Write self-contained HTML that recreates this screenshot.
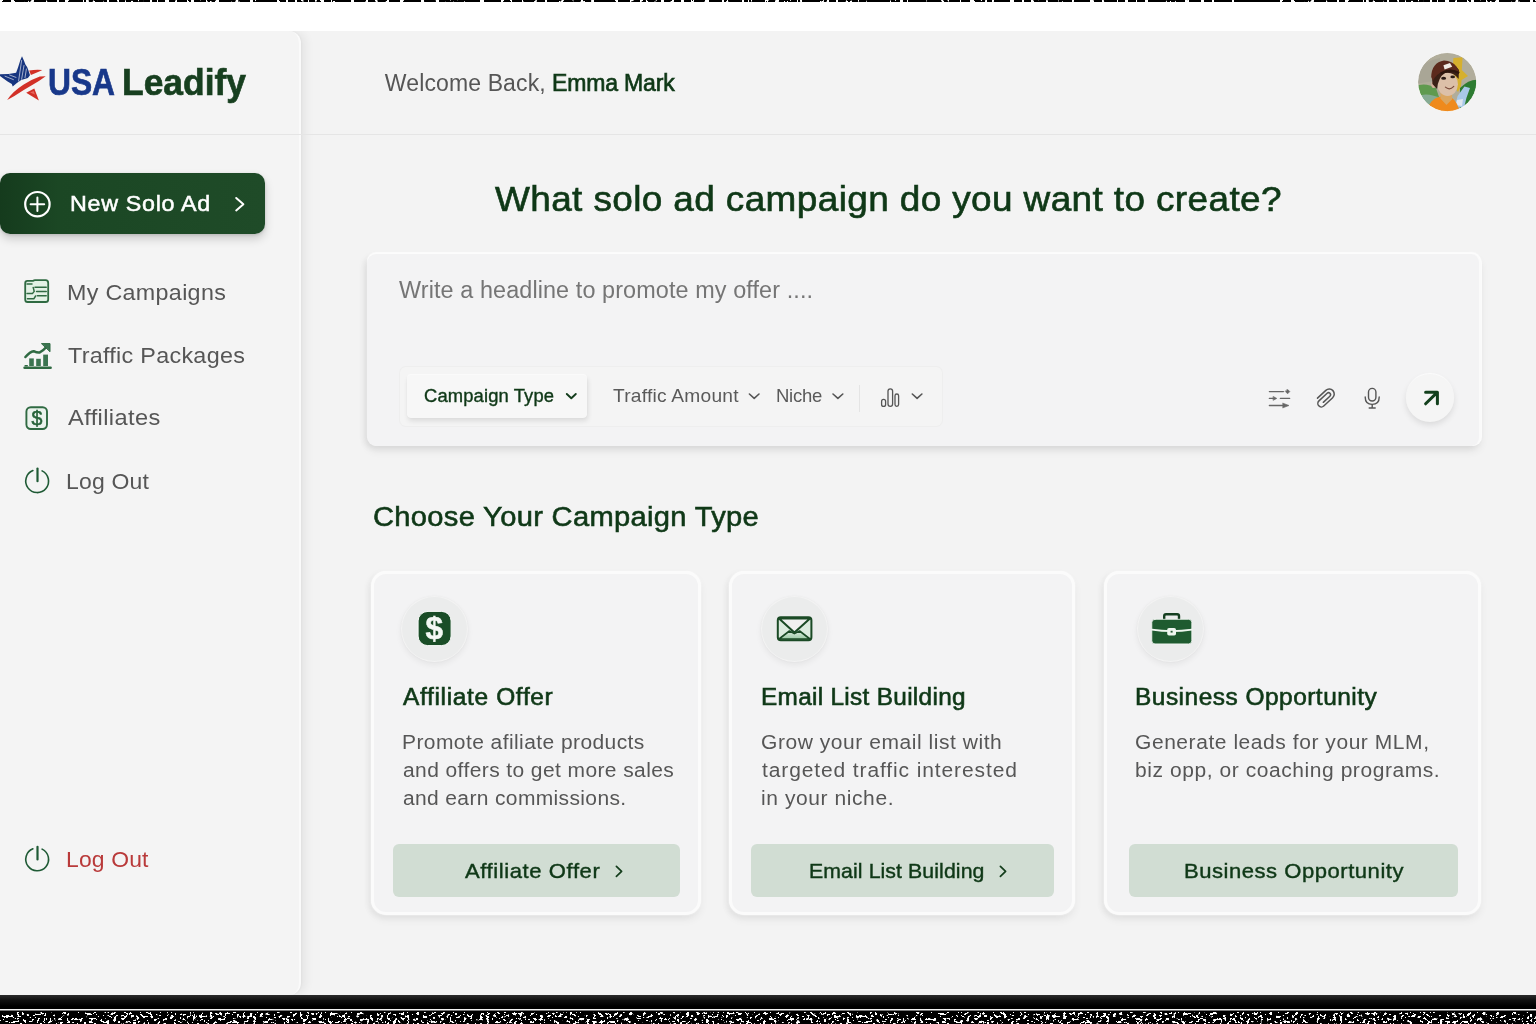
<!DOCTYPE html>
<html lang="en">
<head>
<meta charset="utf-8">
<title>USA Leadify</title>
<style>
*{box-sizing:border-box;margin:0;padding:0}
html,body{width:1536px;height:1024px;overflow:hidden;background:#fff}
body{font-family:"Liberation Sans",sans-serif;position:relative;color:#555}
.t{position:absolute;white-space:nowrap;line-height:1;font-family:"Liberation Sans",sans-serif}
svg{position:absolute;overflow:visible}
#app{position:absolute;left:0;top:31px;width:1536px;height:964px;background:#f3f3f3;overflow:hidden;will-change:transform}
#side{position:absolute;left:0;top:0;width:301px;height:964px;background:#f4f4f4;border-radius:0 12px 12px 0;border-right:2px solid #fafafa;box-shadow:5px 0 10px rgba(0,0,0,.06), 1px 0 2px rgba(0,0,0,.03)}
#hline{position:absolute;left:0;top:103px;width:1536px;height:1px;background:#e5e5e5}
#topnoise{position:absolute;left:0;top:0;width:1536px;height:3px}
#botband{position:absolute;left:0;top:995px;width:1536px;height:29px;background:linear-gradient(#2c2c2c 0,#111 5px,#000 11px)}
#botline{position:absolute;left:0;top:1009px;width:1536px;height:2px;background:linear-gradient(#f2f2f2 0,#f2f2f2 50%,#777 50%,#777 100%)}
#botnoise{position:absolute;left:0;top:1010px;width:1536px;height:14px}
#newbtn{position:absolute;left:0;top:142px;width:265px;height:61px;background:linear-gradient(90deg,#153b1d 0,#1b4724 22%,#1f4b28 100%);border-radius:10px;box-shadow:0 5px 10px rgba(0,0,0,.17), 0 1px 3px rgba(0,0,0,.12)}
#inputcard{position:absolute;left:367px;top:223px;width:1114px;height:192px;background:#f3f3f4;border-radius:9px;border-right:2px solid #fafafa;box-shadow:0 -2px 1px #fcfcfc, 1px 0 0 #fbfbfb, -3px 2px 6px rgba(0,0,0,.06), 0 5px 8px rgba(0,0,0,.07)}
#toolbar{position:absolute;left:400px;top:336px;width:542px;height:59px;background:#f4f4f4;border-radius:6px;box-shadow:0 0 0 1px #eeeeee}
#ctype{position:absolute;left:407px;top:344px;width:180px;height:43px;background:#f7f7f7;border-radius:4px;box-shadow:0 -1px 0 #fafafa, 1px 3px 5px rgba(0,0,0,.10), 0 0 1px rgba(0,0,0,.08)}
#tdiv{position:absolute;left:859px;top:354px;width:1px;height:27px;background:#e4e4e4}
#send{position:absolute;left:1406px;top:343px;width:48px;height:48px;border-radius:50%;background:#f5f5f5;box-shadow:0 3px 6px rgba(0,0,0,.10), 0 -1px 1px #fff}
.card{position:absolute;top:540px;height:344px;background:#f3f3f4;border-radius:15px;border:3px solid #fbfbfb;box-shadow:0 0 2px rgba(255,255,255,.9), -3px 2px 6px rgba(0,0,0,.045), 0 5px 8px rgba(0,0,0,.055)}
.ic{position:absolute;top:565px;width:67px;height:66px;border-radius:50%;background:#ebecec;border:1.5px solid #f3f3f3;box-shadow:0 3px 6px rgba(0,0,0,.06), 0 0 2px rgba(0,0,0,.04)}
.cbtn{position:absolute;top:813px;height:53px;background:#d1ddd3;border-radius:6px}
</style>
</head>
<body>
<div id="app">
<div id="side"></div>
<div id="hline"></div>
<div id="newbtn"></div>
<div id="inputcard"></div>
<div id="toolbar"></div>
<div id="ctype"></div>
<div id="tdiv"></div>
<div id="send"></div>
<div class="card" style="left:371px;width:330px"></div>
<div class="card" style="left:729px;width:346px"></div>
<div class="card" style="left:1104px;width:377px"></div>
<div class="ic" style="left:401px"></div>
<div class="ic" style="left:761px"></div>
<div class="ic" style="left:1137px"></div>
<div class="cbtn" style="left:393px;width:287px"></div>
<div class="cbtn" style="left:751px;width:303px"></div>
<div class="cbtn" style="left:1129px;width:329px"></div>
<span class="t" style="left:47.75px;top:33.00px;font-size:37.4px;color:#18388a;transform:scaleX(0.8487);transform-origin:0 50%;font-weight:700;-webkit-text-stroke:0.7px #18388a;">USA</span>
<span class="t" style="left:121.66px;top:33.00px;font-size:37.4px;color:#173f1f;transform:scaleX(0.9473);transform-origin:0 50%;font-weight:700;-webkit-text-stroke:0.7px #173f1f;">Leadify</span>
<span class="t" style="left:384.80px;top:41.00px;font-size:23px;color:#565656;letter-spacing:0.128px;">Welcome Back,</span>
<span class="t" style="left:552.05px;top:41.00px;font-size:23px;color:#0f3817;letter-spacing:-0.156px;-webkit-text-stroke:0.7px #0f3817;">Emma Mark</span>
<span class="t" style="left:69.70px;top:162.00px;font-size:22.2px;color:#fff;letter-spacing:0.646px;transform:scaleX(1.0500);transform-origin:0 50%;-webkit-text-stroke:0.5px #fff;">New Solo Ad</span>
<span class="t" style="left:67.06px;top:251.00px;font-size:22.5px;color:#565656;letter-spacing:0.306px;transform:scaleX(1.0351);transform-origin:0 50%;">My Campaigns</span>
<span class="t" style="left:68.00px;top:314.00px;font-size:22.5px;color:#565656;letter-spacing:0.270px;transform:scaleX(1.0380);transform-origin:0 50%;">Traffic Packages</span>
<span class="t" style="left:68.00px;top:376.00px;font-size:22.5px;color:#565656;letter-spacing:0.360px;transform:scaleX(1.0500);transform-origin:0 50%;">Affiliates</span>
<span class="t" style="left:66.48px;top:440.00px;font-size:22.5px;color:#565656;letter-spacing:0.189px;transform:scaleX(1.0218);transform-origin:0 50%;">Log Out</span>
<span class="t" style="left:65.98px;top:818.00px;font-size:22.5px;color:#b93a3a;letter-spacing:0.157px;transform:scaleX(1.0180);transform-origin:0 50%;">Log Out</span>
<span class="t" style="left:495.32px;top:151.00px;font-size:35.8px;color:#0f3817;letter-spacing:0.363px;transform:scaleX(1.0324);transform-origin:0 50%;-webkit-text-stroke:0.65px #0f3817;">What solo ad campaign do you want to create?</span>
<span class="t" style="left:398.60px;top:248.00px;font-size:23px;color:#757575;letter-spacing:0.107px;transform:scaleX(1.0162);transform-origin:0 50%;">Write a headline to promote my offer ....</span>
<span class="t" style="left:424.19px;top:356.00px;font-size:18px;color:#0f3817;letter-spacing:0.139px;transform:scaleX(1.0203);transform-origin:0 50%;-webkit-text-stroke:0.38px #0f3817;">Campaign Type</span>
<span class="t" style="left:612.70px;top:356.00px;font-size:18.5px;color:#5a5a5a;letter-spacing:0.216px;transform:scaleX(1.0366);transform-origin:0 50%;">Traffic Amount</span>
<span class="t" style="left:775.90px;top:356.00px;font-size:18.5px;color:#5a5a5a;letter-spacing:-0.202px;">Niche</span>
<span class="t" style="left:373.47px;top:471.00px;font-size:28.2px;color:#0f3817;letter-spacing:0.315px;transform:scaleX(1.0320);transform-origin:0 50%;-webkit-text-stroke:0.6px #0f3817;">Choose Your Campaign Type</span>
<span class="t" style="left:403.20px;top:655.00px;font-size:23.3px;color:#0f3817;letter-spacing:0.629px;transform:scaleX(1.0500);transform-origin:0 50%;-webkit-text-stroke:0.6px #0f3817;">Affiliate Offer</span>
<span class="t" style="left:760.96px;top:655.00px;font-size:23.3px;color:#0f3817;letter-spacing:0.300px;transform:scaleX(1.0449);transform-origin:0 50%;-webkit-text-stroke:0.6px #0f3817;">Email List Building</span>
<span class="t" style="left:1135.45px;top:655.00px;font-size:23.3px;color:#0f3817;letter-spacing:0.465px;transform:scaleX(1.0500);transform-origin:0 50%;-webkit-text-stroke:0.6px #0f3817;">Business Opportunity</span>
<span class="t" style="left:401.85px;top:701.00px;font-size:20px;color:#565656;letter-spacing:0.400px;transform:scaleX(1.0500);transform-origin:0 50%;">Promote afiliate products</span>
<span class="t" style="left:402.90px;top:729.00px;font-size:20px;color:#565656;letter-spacing:0.384px;transform:scaleX(1.0500);transform-origin:0 50%;">and offers to get more sales</span>
<span class="t" style="left:402.90px;top:757.00px;font-size:20px;color:#565656;letter-spacing:0.343px;transform:scaleX(1.0500);transform-origin:0 50%;">and earn commissions.</span>
<span class="t" style="left:760.65px;top:701.00px;font-size:20px;color:#565656;letter-spacing:0.523px;transform:scaleX(1.0500);transform-origin:0 50%;">Grow your email list with</span>
<span class="t" style="left:761.70px;top:729.00px;font-size:20px;color:#565656;letter-spacing:0.841px;transform:scaleX(1.0500);transform-origin:0 50%;">targeted traffic interested</span>
<span class="t" style="left:760.65px;top:757.00px;font-size:20px;color:#565656;letter-spacing:0.555px;transform:scaleX(1.0500);transform-origin:0 50%;">in your niche.</span>
<span class="t" style="left:1134.85px;top:701.00px;font-size:20px;color:#565656;letter-spacing:0.530px;transform:scaleX(1.0500);transform-origin:0 50%;">Generate leads for your MLM,</span>
<span class="t" style="left:1134.95px;top:729.00px;font-size:20px;color:#565656;letter-spacing:0.537px;transform:scaleX(1.0500);transform-origin:0 50%;">biz opp, or coaching programs.</span>
<span class="t" style="left:465.21px;top:829.00px;font-size:21px;color:#0f3817;letter-spacing:0.553px;transform:scaleX(1.0500);transform-origin:0 50%;-webkit-text-stroke:0.42px #0f3817;">Affiliate Offer</span>
<span class="t" style="left:809.00px;top:829.00px;font-size:21px;color:#0f3817;letter-spacing:0.083px;transform:scaleX(1.0134);transform-origin:0 50%;-webkit-text-stroke:0.42px #0f3817;">Email List Building</span>
<span class="t" style="left:1184.06px;top:829.00px;font-size:21px;color:#0f3817;letter-spacing:0.497px;transform:scaleX(1.0500);transform-origin:0 50%;-webkit-text-stroke:0.42px #0f3817;">Business Opportunity</span>
<svg style="left:0;top:0" width="1536" height="964" viewBox="0 31 1536 964" fill="none" stroke-linecap="round" stroke-linejoin="round">
<defs>
<clipPath id="avc"><circle cx="1447.2" cy="82.1" r="29.3"/></clipPath>
<linearGradient id="envg" x1="0" y1="0" x2="0" y2="1"><stop offset="0" stop-color="#dcebdf"/><stop offset="1" stop-color="#9ccaa6"/></linearGradient>
</defs>
<!-- logo star -->
<g id="star" stroke="none">
<path d="M22 56.3 L24.1 61 L25.4 64.4 L27.1 66.9 L28.4 70.3 L30 75.2 L27.9 77.9 L21.2 80 L16.9 83 L12.7 86.6 L11.8 83.9 L7.6 81.5 L3.4 78.6 L0 76 L0 74.3 L8.5 74 L16.1 72.8 L18.2 66.9 L20.3 60.2 Z" fill="#17357f"/>
<path d="M21.6 60.5 L18.6 81 M24 65.5 L21.6 79.2 M5 76.2 L13.4 79.6 M26.4 69 L25 77.6 M9.6 75 L16 77.4" stroke="#fff" stroke-width="0.75" opacity=".8"/>
<path d="M29.2 70.4 Q36 69.2 42.3 69.9 L39.8 71.2 L33.9 73.7 L30.9 75.1 Z" fill="#d23027"/>
<path d="M45.7 76.2 L39.8 76.4 Q32.2 79 23.7 84.5 Q12 92 7.2 100 L14.4 96.1 Q23.7 89.9 32.2 85.1 Q39.8 80.6 45.7 76.2 Z" fill="#d23027"/>
<path d="M26.2 92.7 L34.3 88.5 L38.9 100.5 Z" fill="#d23027"/>
<path d="M30 92.6 L33.6 91 L35 94.6 Z" fill="#e8655c"/>
</g>
<!-- avatar -->
<filter id="avb" x="-5%" y="-5%" width="110%" height="110%"><feGaussianBlur stdDeviation="0.55"/></filter>
<g clip-path="url(#avc)" stroke="none"><g filter="url(#avb)">
<rect x="1415" y="50" width="65" height="65" fill="#b1ad9b"/>
<path d="M1415 70 Q1428 60 1440 58 L1440 80 L1415 84z" fill="#a9a696"/>
<path d="M1415 86 Q1426 82 1436 88 L1440 100 L1415 104z" fill="#5f9a4f"/>
<path d="M1417 96 Q1428 92 1440 98 v16 h-26z" fill="#86ab93"/>
<path d="M1453.4 58 L1462.6 57.2 L1461.8 70 L1468 76 L1461.6 80 L1461 86 L1458 92 L1452 84z" fill="#d6b02e"/>
<path d="M1460 88 Q1470 78 1480 80 v36 h-20z" fill="#2e7b32"/>
<path d="M1464.4 86.6 L1470 88 L1466.4 98 L1464 108 L1455 106 L1457.6 96z" fill="#a8c8e8"/>
<path d="M1457 100 L1463 99 L1462 106 L1456 105z" fill="#dfe6ee"/>
<path d="M1427 113 Q1429 98.6 1441 96.6 L1452 98 Q1458 102 1459.4 113 Z" fill="#ef8a1b"/>
<path d="M1440.4 92 h11.6 v7.4 l-5.6 5.6 l-6 -6.4z" fill="#dba660"/>
<ellipse cx="1447.6" cy="84.2" rx="10.3" ry="11.8" fill="#dcc0a8"/>
<ellipse cx="1433.6" cy="84.6" rx="2.3" ry="3.4" fill="#d6b49c"/>
<path d="M1432.4 84 Q1431 67 1442 62.6 Q1452 60.6 1459 70 L1458.6 79 Q1453 71.4 1445 73 Q1438.4 77 1437 89 Z" fill="#3b2016"/>
<path d="M1431.2 77 Q1431.6 62.4 1444 60.4 Q1452.4 60.6 1456.4 66.6 L1459.6 72.4 Q1450 67 1440.6 72.6 Q1434.6 76.6 1433 81 Z" fill="#5c2a1c"/>
<path d="M1440 72.8 Q1450 66.6 1459.6 72 L1458.8 74 Q1450 69.6 1441 74.6z" fill="#2e1810"/>
<path d="M1443.4 65.2 l6.6 -2.2 l2.2 3.8 l-7.6 2.8z" fill="#f1ebe4"/>
<ellipse cx="1443.6" cy="78.2" rx="2.5" ry="1.5" fill="#2a1a14"/>
<ellipse cx="1452.7" cy="76.9" rx="2.3" ry="1.4" fill="#2a1a14"/>
<path d="M1445.4 87.2 Q1449.6 90.8 1453.8 86.4" stroke="#7a4a3a" stroke-width="1.1" fill="none"/>
</g></g>
<circle cx="1447.2" cy="82.1" r="29.6" stroke="#f6f6f4" stroke-width="0.9" fill="none"/>
<!-- new solo ad icons -->
<g stroke="#fff" stroke-width="2">
<circle cx="37.4" cy="204.2" r="12.2" stroke-width="2.2"/>
<path d="M37.4 197.4 V211 M30.6 204.2 H44.2"/>
<path d="M236.2 198 L243.4 204.2 L236.2 210.4"/>
</g>
<!-- my campaigns -->
<g stroke="#2f6a42" stroke-width="1.8">
<path d="M27.4 280.8 H33.2 Q34 280.2 35 280.2 H45.6 Q48.2 280.2 48.2 283 V299.4 Q48.2 302 45.6 302 H27.6 Q25.2 302 25.2 299.4 V283.2 Q25.2 280.8 27.4 280.8 Z" fill="#e2f1e5"/>
<path d="M35 287.2 H46.2 M36.6 291.5 H46.2 M37.4 295.8 H46.2" stroke-width="1.6"/>
<path d="M27 284 H32 M27 293.6 H32.4 L34.2 291.4 L33.2 287.4 M27.4 298.8 H33.8 L35.6 296" stroke-width="1.5"/>
</g>
<!-- traffic packages -->
<g stroke="#2f6a42" fill="#3b7450">
<path d="M24.6 367.8 H50.6" stroke-width="2.6"/>
<rect x="29.2" y="358.4" width="4.6" height="7.6" stroke="none"/>
<rect x="36.2" y="358.8" width="4.6" height="7.2" stroke="none"/>
<rect x="43.2" y="354.6" width="4.8" height="11.4" stroke="none"/>
<path d="M25.4 357 Q30 351.6 33.6 351.2 Q37 352.8 39.4 352.6 Q43.4 350.6 47 346.2" stroke-width="2.5" fill="none"/>
<path d="M41.8 343.6 H50 V351.4 Z" stroke-width="1" />
<path d="M25.2 365.8 h2" stroke-width="1.6"/>
</g>
<!-- affiliates -->
<g>
<rect x="26.4" y="407.2" width="20.6" height="21.8" rx="4.4" stroke="#2f6a42" stroke-width="1.9" fill="#ebf3ed"/>
</g>
<!-- power icons -->
<g stroke="#1f5a35">
<path d="M32.9 470.6 A11.4 11.4 0 1 0 42.1 470.9" stroke-width="1.6"/>
<path d="M37.5 468.6 V481.2" stroke-width="2.2"/>
<path d="M32.9 848.8 A11.4 11.4 0 1 0 42.1 849.1" stroke-width="1.6"/>
<path d="M37.5 846.8 V859.4" stroke-width="2.2"/>
</g>
<!-- toolbar chevrons -->
<path d="M566.8 394 L571.3 398.2 L575.8 394" stroke="#143d1c" stroke-width="1.9"/>
<g stroke="#555" stroke-width="1.6">
<path d="M749.4 394 L754.2 398.4 L759 394"/>
<path d="M833 394 L837.9 398.4 L842.8 394"/>
<path d="M912.3 394 L917.1 398.4 L921.9 394"/>
</g>
<!-- bars icon -->
<g stroke="#555" stroke-width="1.3">
<rect x="881.6" y="399.4" width="4" height="7" rx="2"/>
<rect x="888" y="388.8" width="4.6" height="17.6" rx="2.3"/>
<rect x="895" y="394" width="3.6" height="12.4" rx="1.8"/>
</g>
<!-- sliders -->
<g stroke="#666" stroke-width="1.4" fill="#666">
<path d="M1269.4 391.6 H1283.4"/><path d="M1287.6 389.4 L1289.8 391.6 L1287.6 393.8 L1285.4 391.6 Z" stroke-width=".6"/>
<path d="M1269.4 398.4 H1273.6 M1280.4 398.4 H1289.6"/><path d="M1273.4 396.6 L1276.8 398.4 L1273.4 400.2 Z" stroke-width=".6"/>
<path d="M1269.4 405.5 H1283"/><path d="M1283 403.2 L1289 405.5 L1283 407.8 Z" stroke-width=".6"/>
</g>
<!-- paperclip -->
<g transform="translate(1325 398) rotate(-43) translate(0.4 -2.5)" stroke="#555" stroke-width="1.5">
<path d="M-6 -2.5 H5.4 A5 5 0 0 1 5.4 7.5 H-6.8 A3.5 3.5 0 0 1 -6.8 0.5 H4.4 A2 2 0 0 1 4.4 4.5 H-4.6"/>
</g>
<!-- mic -->
<g stroke="#555" stroke-width="1.4">
<rect x="1368.5" y="388.4" width="7.4" height="12.6" rx="3.7"/>
<path d="M1365.2 397 Q1365.2 404.4 1372.2 404.4 Q1379.2 404.4 1379.2 397"/>
<path d="M1372.2 404.6 V407.6 M1369.2 408 H1375.2"/>
</g>
<!-- send arrow -->
<path d="M1425.6 392.2 H1437.4 V403.8 M1437 392.6 L1425.6 403.8" stroke="#13401d" stroke-width="3"/>
<!-- card 1 icon -->
<rect x="418.1" y="611.4" width="33" height="34.2" rx="9.5" fill="#1a4d27" stroke="#f7faf7" stroke-width="1"/>
<!-- card 2 envelope -->
<g stroke="#1a4a25" stroke-width="2">
<rect x="777.8" y="617.2" width="33.6" height="23" rx="3" fill="#dcebdf"/>
<path d="M779 639 L789.4 631 L794.4 633.6 L799.6 631 L810 639 Z" fill="url(#envg)" stroke-width="1.6"/>
<path d="M779 618.6 L794.4 632.6 L810 618.6 Z" fill="#f0f0f0"/>
</g>
<!-- card 3 briefcase -->
<g>
<path d="M1164.2 619.4 V616 Q1164.2 614.2 1166 614.2 H1177.2 Q1179 614.2 1179 616 V619.4" stroke="#153f20" stroke-width="2.4"/>
<rect x="1151.8" y="619.3" width="40" height="24.6" rx="3.2" fill="#1f5b30" stroke="#f6faf6" stroke-width=".8"/>
<path d="M1151.8 629.6 Q1171.8 632.6 1191.8 629.6" stroke="#eef6ef" stroke-width="1.7"/>
<rect x="1167.2" y="628" width="8.8" height="7.5" rx="1.8" fill="#eef6ef"/>
<rect x="1170.6" y="630.8" width="2" height="1.8" fill="#2b5e39"/>
</g>
<!-- card button chevrons -->
<g stroke="#143d1c" stroke-width="1.7">
<path d="M616.4 866.4 L621.6 871.4 L616.4 876.4"/>
<path d="M1000.4 866.4 L1005.6 871.4 L1000.4 876.4"/>
</g>
</svg>
<span class="t" style="left:31.6px;top:378px;font-size:19.6px;color:#256238;-webkit-text-stroke:.55px #256238">$</span>
<span class="t" style="left:425.5px;top:582px;font-size:31.5px;font-weight:bold;color:#f4f8f4;-webkit-text-stroke:.5px #f4f8f4">$</span>

</div>
<svg id="topnoise" width="1536" height="3" viewBox="0 0 1536 3">
<filter id="fn1" x="0" y="0" width="100%" height="100%" color-interpolation-filters="sRGB"><feTurbulence type="fractalNoise" baseFrequency="0.2 0.05" numOctaves="3" seed="11"/><feColorMatrix values="1 0 0 0 0 1 0 0 0 0 1 0 0 0 0 0 0 0 0 1"/><feComponentTransfer><feFuncR type="linear" slope="40" intercept="-23.6"/><feFuncG type="linear" slope="40" intercept="-23.6"/><feFuncB type="linear" slope="40" intercept="-23.6"/></feComponentTransfer></filter>
<rect width="1536" height="2" filter="url(#fn1)"/></svg>
<div id="botband"></div>
<div id="botline"></div>
<svg id="botnoise" width="1536" height="14" viewBox="0 0 1536 14">
<filter id="fn2" x="0" y="0" width="100%" height="100%" color-interpolation-filters="sRGB"><feTurbulence type="fractalNoise" baseFrequency="0.3 0.36" numOctaves="3" seed="5"/><feColorMatrix values="1 0 0 0 0 1 0 0 0 0 1 0 0 0 0 0 0 0 0 1"/><feComponentTransfer><feFuncR type="linear" slope="30" intercept="-17.6"/><feFuncG type="linear" slope="30" intercept="-17.6"/><feFuncB type="linear" slope="30" intercept="-17.6"/></feComponentTransfer></filter>
<rect y="2.5" width="1536" height="11.5" filter="url(#fn2)"/></svg>
</body>
</html>
